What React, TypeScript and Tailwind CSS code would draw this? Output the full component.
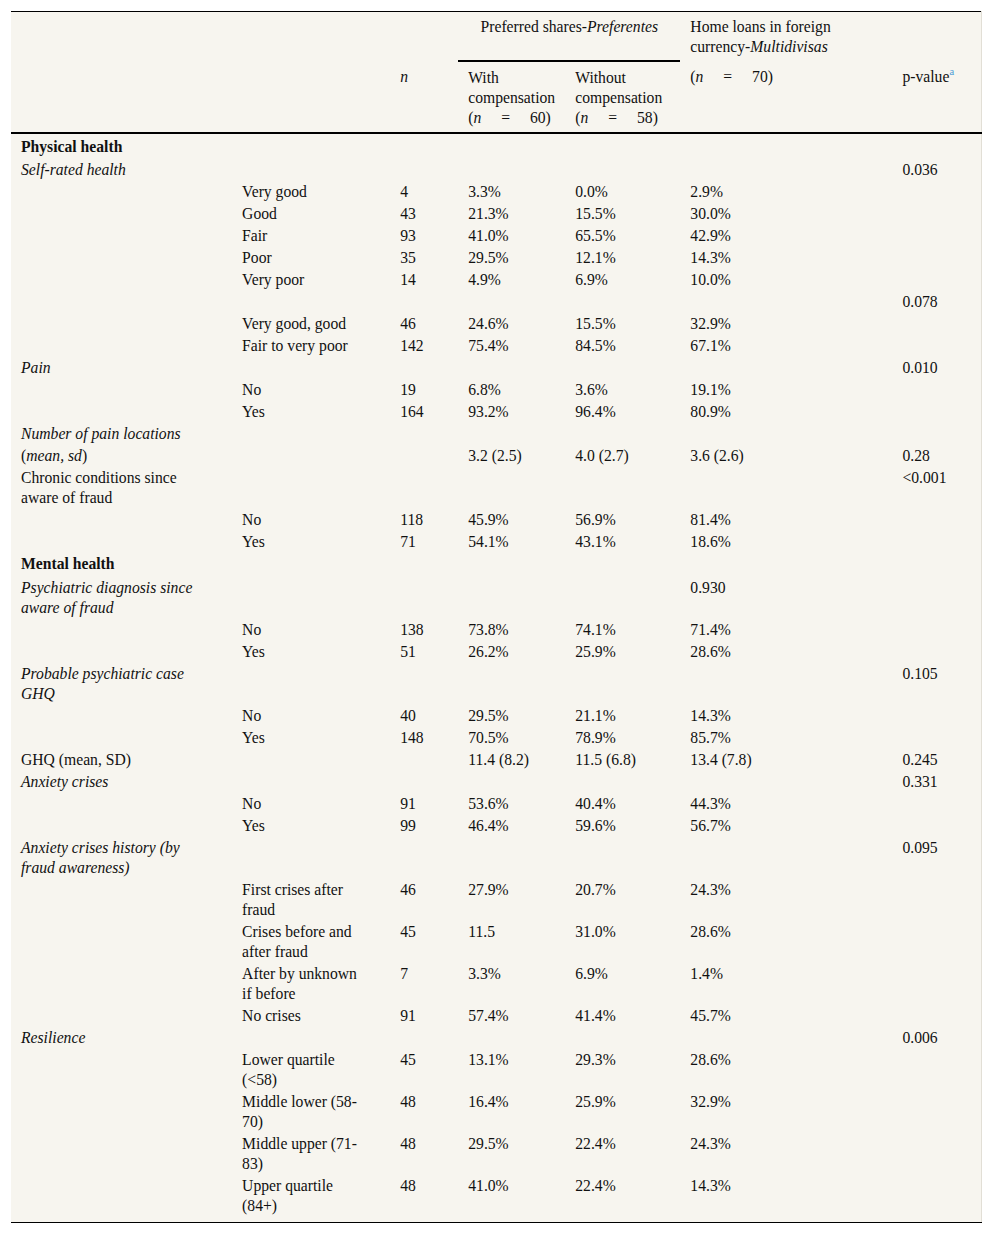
import React from "react";

type Row = {
  c1?: React.ReactNode;
  s1?: "b" | "i" | "n";
  c2?: string;
  n?: string;
  a?: string;
  b?: string;
  c?: string;
  p?: string;
};

const rows: Row[] = [
  { c1: "Physical health", s1: "b" },
  { c1: "Self-rated health", s1: "i", p: "0.036" },
  { c2: "Very good", n: "4", a: "3.3%", b: "0.0%", c: "2.9%" },
  { c2: "Good", n: "43", a: "21.3%", b: "15.5%", c: "30.0%" },
  { c2: "Fair", n: "93", a: "41.0%", b: "65.5%", c: "42.9%" },
  { c2: "Poor", n: "35", a: "29.5%", b: "12.1%", c: "14.3%" },
  { c2: "Very poor", n: "14", a: "4.9%", b: "6.9%", c: "10.0%" },
  { p: "0.078" },
  { c2: "Very good, good", n: "46", a: "24.6%", b: "15.5%", c: "32.9%" },
  { c2: "Fair to very poor", n: "142", a: "75.4%", b: "84.5%", c: "67.1%" },
  { c1: "Pain", s1: "i", p: "0.010" },
  { c2: "No", n: "19", a: "6.8%", b: "3.6%", c: "19.1%" },
  { c2: "Yes", n: "164", a: "93.2%", b: "96.4%", c: "80.9%" },
  { c1: "Number of pain locations", s1: "i" },
  {
    c1: (
      <>
        (<i>mean, sd</i>)
      </>
    ),
    s1: "n",
    a: "3.2 (2.5)",
    b: "4.0 (2.7)",
    c: "3.6 (2.6)",
    p: "0.28",
  },
  { c1: "Chronic conditions since aware of fraud", s1: "n", p: "<0.001" },
  { c2: "No", n: "118", a: "45.9%", b: "56.9%", c: "81.4%" },
  { c2: "Yes", n: "71", a: "54.1%", b: "43.1%", c: "18.6%" },
  { c1: "Mental health", s1: "b" },
  { c1: "Psychiatric diagnosis since aware of fraud", s1: "i", c: "0.930" },
  { c2: "No", n: "138", a: "73.8%", b: "74.1%", c: "71.4%" },
  { c2: "Yes", n: "51", a: "26.2%", b: "25.9%", c: "28.6%" },
  { c1: "Probable psychiatric case GHQ", s1: "i", p: "0.105" },
  { c2: "No", n: "40", a: "29.5%", b: "21.1%", c: "14.3%" },
  { c2: "Yes", n: "148", a: "70.5%", b: "78.9%", c: "85.7%" },
  { c1: "GHQ (mean, SD)", s1: "n", a: "11.4 (8.2)", b: "11.5 (6.8)", c: "13.4 (7.8)", p: "0.245" },
  { c1: "Anxiety crises", s1: "i", p: "0.331" },
  { c2: "No", n: "91", a: "53.6%", b: "40.4%", c: "44.3%" },
  { c2: "Yes", n: "99", a: "46.4%", b: "59.6%", c: "56.7%" },
  { c1: "Anxiety crises history (by fraud awareness)", s1: "i", p: "0.095" },
  { c2: "First crises after fraud", n: "46", a: "27.9%", b: "20.7%", c: "24.3%" },
  { c2: "Crises before and after fraud", n: "45", a: "11.5", b: "31.0%", c: "28.6%" },
  { c2: "After by unknown if before", n: "7", a: "3.3%", b: "6.9%", c: "1.4%" },
  { c2: "No crises", n: "91", a: "57.4%", b: "41.4%", c: "45.7%" },
  { c1: "Resilience", s1: "i", p: "0.006" },
  { c2: "Lower quartile (<58)", n: "45", a: "13.1%", b: "29.3%", c: "28.6%" },
  { c2: "Middle lower (58-70)", n: "48", a: "16.4%", b: "25.9%", c: "32.9%" },
  { c2: "Middle upper (71-83)", n: "48", a: "29.5%", b: "22.4%", c: "24.3%" },
  { c2: "Upper quartile (84+)", n: "48", a: "41.0%", b: "22.4%", c: "14.3%" },
];

const td = "align-top pl-[10px] leading-[20px] font-normal text-left";

function NEq({ v }: { v: string }) {
  return (
    <span className="[word-spacing:16px] whitespace-nowrap">
      (<i>n</i> = {v})
    </span>
  );
}

export default function App() {
  return (
    <div className="min-h-[1233px] bg-white pt-[11px] pl-[11px] pr-[10px] pb-[10px]">
      <table
        className="table-fixed w-[971px] bg-[#f7f5ef] border-t border-b border-t-black border-b-black border-r border-r-[#e2dfd6] text-[#111] text-[15.66px] leading-[20px]"
        style={{ fontFamily: '"Liberation Serif", "Times New Roman", serif' }}
      >
        <colgroup>
          <col className="w-[221px]" />
          <col className="w-[158px]" />
          <col className="w-[68px]" />
          <col className="w-[107px]" />
          <col className="w-[115px]" />
          <col className="w-[212px]" />
          <col className="w-[89px]" />
        </colgroup>
        <thead>
          <tr>
            <th className="pt-[5px] pb-[4px]" colSpan={3}></th>
            <th
              colSpan={2}
              className="pt-[5px] pb-[4px] align-top font-normal text-center border-b-2 border-b-black"
            >
              Preferred shares-<i>Preferentes</i>
            </th>
            <th className="pt-[5px] pb-[4px] pl-[10px] pr-[10px] align-top font-normal text-left">
              Home loans in foreign currency-<i>Multidivisas</i>
            </th>
            <th className="pt-[5px] pb-[4px]"></th>
          </tr>
          <tr className="border-b-2 border-b-black">
            <th className="pt-[6px] pb-[4px]"></th>
            <th className="pt-[6px] pb-[4px]"></th>
            <th className="pt-[6px] pb-[4px] pl-[10px] align-top font-normal text-left">
              <i>n</i>
            </th>
            <th className="pt-[6px] pb-[4px] pl-[10px] pr-[2px] align-top font-normal text-left">
              With compensation <NEq v="60" />
            </th>
            <th className="pt-[6px] pb-[4px] pl-[10px] pr-[4px] align-top font-normal text-left">
              Without compensation <NEq v="58" />
            </th>
            <th className="pt-[6px] pb-[4px] pl-[10px] align-top font-normal text-left">
              <NEq v="70" />
            </th>
            <th className="pt-[6px] pb-[4px] pl-[10px] align-top font-normal text-left whitespace-nowrap">
              p-value
              <span className="text-[10.5px] text-[#4a9bd6] relative top-[-7px]">a</span>
            </th>
          </tr>
        </thead>
        <tbody>
          {rows.map((r, i) => {
            const first = i === 0;
            const last = i === rows.length - 1;
            const pad = first
              ? " pt-[3px] pb-[2px]"
              : last
              ? " pt-[1px] pb-[6px]"
              : r.s1 === "b"
              ? " pt-[1px] pb-[3px]"
              : " py-[1px]";
            const s1 =
              r.s1 === "b" ? "font-bold" : r.s1 === "i" ? "italic" : "";
            return (
              <tr key={i}>
                <td className={td + pad + " pr-[30px]"}>
                  <span className={s1}>{r.c1}</span>
                </td>
                <td className={td + pad + " pr-[30px]"}>{r.c2}</td>
                <td className={td + pad}>{r.n}</td>
                <td className={td + pad}>{r.a}</td>
                <td className={td + pad}>{r.b}</td>
                <td className={td + pad}>{r.c}</td>
                <td className={td + pad}>{r.p}</td>
              </tr>
            );
          })}
        </tbody>
      </table>
    </div>
  );
}
